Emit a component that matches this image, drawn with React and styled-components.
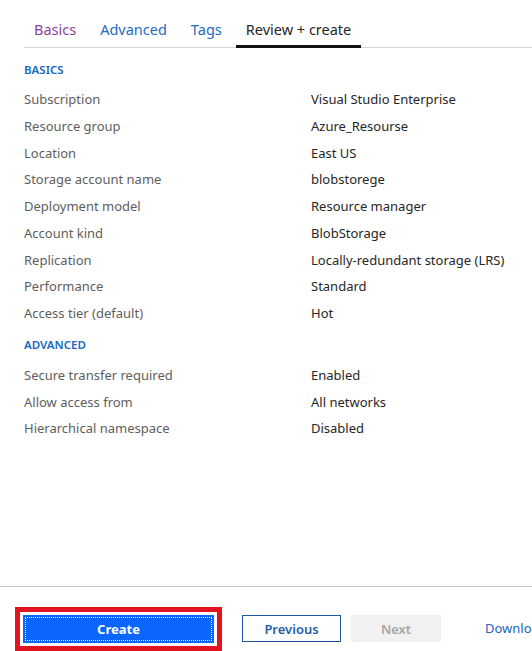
import React from "react";
import styled, { createGlobalStyle } from "styled-components";

const Global = createGlobalStyle`
  html, body { margin: 0; padding: 0; background: #fff; }
  body { font-family: "Noto Sans", "Segoe UI", Arial, sans-serif; font-size: 13px; color: #262626; }
`;

const Page = styled.div`
  width: 532px;
  height: 651px;
  display: flex;
  flex-direction: column;
  overflow: hidden;
`;

const TabBar = styled.div`
  display: flex;
  gap: 4px;
  margin-left: 24px;
  padding-top: 14px;
  border-bottom: 1px solid #d6d6d6;
`;

const Tab = styled.div`
  padding: 5px 10px 6px;
  font-size: 14.5px;
  line-height: 20px;
  color: ${p => p.$color};
  border-bottom: 3px solid ${p => (p.$active ? "#111" : "transparent")};
  margin-bottom: -1px;
  white-space: nowrap;
`;

const Content = styled.div`
  flex: 1;
  padding: 14px 0 0 24px;
`;

const SectionTitle = styled.div`
  font-size: 11.5px;
  font-weight: 600;
  color: #1a66c0;
  line-height: 16px;
  margin-bottom: 12px;
  &:not(:first-child) { margin-top: 6px; margin-bottom: 13px; }
`;

const Row = styled.div`
  display: grid;
  grid-template-columns: 287px 1fr;
  height: 26.75px;
  line-height: 18px;
  white-space: nowrap;
`;

const Label = styled.div`
  color: #5e5e5e;
`;

const Value = styled.div`
  color: #262626;
`;

const Footer = styled.div`
  height: 65px;
  border-top: 1px solid #c8c8c8;
  display: flex;
  align-items: flex-start;
  padding-top: 20px;
  box-sizing: border-box;
  white-space: nowrap;
  overflow: hidden;
`;

const Highlight = styled.div`
  flex-shrink: 0;
  margin-left: 15px;
  border: 5px solid #e3141f;
  padding: 3px;
  display: flex;
`;

const PrimaryButton = styled.button`
  width: 191px;
  height: 28px;
  background: #0a66ff;
  border: none;
  color: #fff;
  font-family: inherit;
  font-size: 13px;
  font-weight: 700;
  outline: 1px dotted #fff;
  outline-offset: -3px;
  padding: 0;
`;

const SecondaryButton = styled.button`
  flex-shrink: 0;
  margin-left: 20px;
  margin-top: 8px;
  width: 99px;
  height: 27px;
  background: #fff;
  border: 1px solid #1d56a0;
  color: #1f5ea8;
  font-family: inherit;
  font-size: 13px;
  font-weight: 600;
  padding: 0;
`;

const DisabledButton = styled.button`
  flex-shrink: 0;
  margin-left: 10px;
  margin-top: 8px;
  width: 90px;
  height: 27px;
  background: #f1f1f1;
  border: none;
  color: #a6a6a6;
  font-family: inherit;
  font-size: 13px;
  font-weight: 600;
  padding: 0;
`;

const LinkText = styled.span`
  flex-shrink: 0;
  margin-left: 44px;
  margin-top: 8px;
  line-height: 27px;
  color: #1a66c0;
  font-size: 13px;
`;

const basics = [
  ["Subscription", "Visual Studio Enterprise"],
  ["Resource group", "Azure_Resourse"],
  ["Location", "East US"],
  ["Storage account name", "blobstorege"],
  ["Deployment model", "Resource manager"],
  ["Account kind", "BlobStorage"],
  ["Replication", "Locally-redundant storage (LRS)"],
  ["Performance", "Standard"],
  ["Access tier (default)", "Hot"],
];

const advanced = [
  ["Secure transfer required", "Enabled"],
  ["Allow access from", "All networks"],
  ["Hierarchical namespace", "Disabled"],
];

export default function App() {
  return (
    <Page>
      <Global />
      <TabBar>
        <Tab $color="#8a3f98">Basics</Tab>
        <Tab $color="#1f6ac4">Advanced</Tab>
        <Tab $color="#1f6ac4">Tags</Tab>
        <Tab $color="#262626" $active>Review + create</Tab>
      </TabBar>
      <Content>
        <SectionTitle>BASICS</SectionTitle>
        {basics.map(([l, v]) => (
          <Row key={l}>
            <Label>{l}</Label>
            <Value>{v}</Value>
          </Row>
        ))}
        <SectionTitle>ADVANCED</SectionTitle>
        {advanced.map(([l, v]) => (
          <Row key={l}>
            <Label>{l}</Label>
            <Value>{v}</Value>
          </Row>
        ))}
      </Content>
      <Footer>
        <Highlight>
          <PrimaryButton>Create</PrimaryButton>
        </Highlight>
        <SecondaryButton>Previous</SecondaryButton>
        <DisabledButton>Next</DisabledButton>
        <LinkText>Download a template for automation</LinkText>
      </Footer>
    </Page>
  );
}
